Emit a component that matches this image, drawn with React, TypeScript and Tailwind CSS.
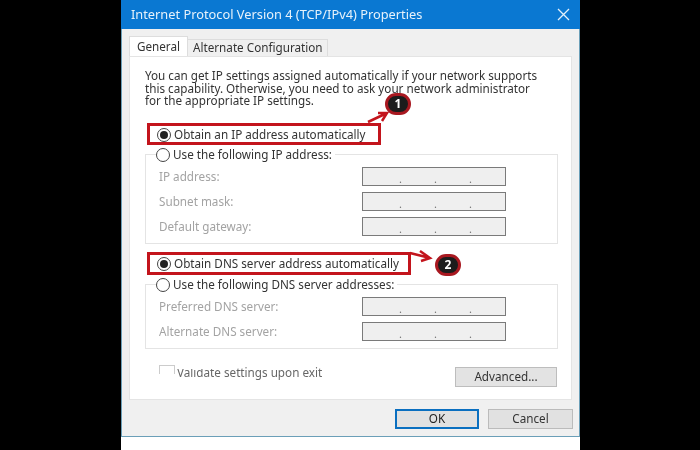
import React from "react";

function Radio({ checked }: { checked?: boolean }) {
  return (
    <span className="w-[14px] h-[14px] rounded-full border border-[#444] bg-white flex items-center justify-center shrink-0">
      {checked && <span className="w-[8px] h-[8px] rounded-full bg-[#222]" />}
    </span>
  );
}

function IpBox() {
  return (
    <div className="w-[144px] h-[19px] border border-[#7a7a7a] bg-[#efefef] flex items-center pl-[36px] gap-[32px] text-[#777] text-[11px] leading-none pt-[3px]">
      <span>.</span>
      <span>.</span>
      <span>.</span>
    </div>
  );
}

function FieldRow({ label }: { label: string }) {
  return (
    <div className="flex items-center justify-between h-[19px] pr-[51px] pl-[13px] text-[#a3a3a3]">
      <span>{label}</span>
      <IpBox />
    </div>
  );
}

function Badge({ n, className }: { n: string; className: string }) {
  return (
    <div
      className={`absolute w-[26px] h-[22px] rounded-full bg-[#1c1c1c] border-[3px] border-[#a81820] text-white text-[12px] font-bold flex items-center justify-center ${className}`}
    >
      {n}
    </div>
  );
}

export default function App() {
  return (
    <div className="relative w-[700px] h-[450px] bg-black pl-[121px] pr-[120px] overflow-hidden font-['Noto_Sans',sans-serif] text-[11.7px] text-[#333] blur-[0.4px]">
      <div className="h-full flex flex-col bg-white">
        <div className="h-[437px] flex flex-col bg-[#f0f0f0] border-x border-b border-[#6b9fb8]">
          <div className="h-[29px] -mx-px bg-[#0a78d2] flex items-center justify-between pl-[10px] pr-[10px] text-white/90 text-[12.8px] shrink-0">
            <span>Internet Protocol Version 4 (TCP/IPv4) Properties</span>
            <svg width="13" height="13" viewBox="0 0 13 13" fill="none" stroke="#e4f0fa" strokeWidth="1.3">
              <path d="M1 1l11 11M12 1L1 12" />
            </svg>
          </div>
          <div className="flex items-end h-[27px] pl-[7px] shrink-0">
            <div className="h-[20px] w-[59px] bg-white border border-b-0 border-[#ddd] text-[#333] flex items-center justify-center">General</div>
            <div className="h-[17px] w-[140px] pl-[5px] bg-[#f0f0f0] border border-b-0 border-l-0 border-[#ddd] text-[#333] flex items-center">Alternate Configuration</div>
          </div>
          <div className="mx-[7px] h-[344px] bg-white border border-[#e4e4e4] shrink-0 pl-[15px] pr-[12px] pt-[12px] relative">
            <p className="leading-[12.5px] h-[38px] whitespace-nowrap">
              You can get IP settings assigned automatically if your network supports
              <br />
              this capability. Otherwise, you need to ask your network administrator
              <br />
              for the appropriate IP settings.
            </p>
            <div className="flex items-center gap-[3px] h-[16px] mt-[20px] ml-[12px]">
              <Radio checked />
              <span>Obtain an IP address automatically</span>
            </div>
            <div className="mt-[11px] h-[90px] w-[413px] border border-[#e4e4e4] flex flex-col">
              <div className="flex items-center gap-[3px] h-[14px] -mt-[7px] ml-[10px] bg-white w-fit pr-[3px]">
                <Radio />
                <span>Use the following IP address:</span>
              </div>
              <div className="flex flex-col gap-[6px] mt-[5px]">
                <FieldRow label="IP address:" />
                <FieldRow label="Subnet mask:" />
                <FieldRow label="Default gateway:" />
              </div>
            </div>
            <div className="flex items-center gap-[3px] h-[16px] mt-[12px] ml-[12px]">
              <Radio checked />
              <span>Obtain DNS server address automatically</span>
            </div>
            <div className="mt-[12px] h-[65px] w-[413px] border border-[#e4e4e4] flex flex-col">
              <div className="flex items-center gap-[3px] h-[14px] -mt-[7px] ml-[10px] bg-white w-fit pr-[3px]">
                <Radio />
                <span>Use the following DNS server addresses:</span>
              </div>
              <div className="flex flex-col gap-[6px] mt-[5px]">
                <FieldRow label="Preferred DNS server:" />
                <FieldRow label="Alternate DNS server:" />
              </div>
            </div>
            <div className="flex items-start justify-between mt-[18px] w-[412px]">
              <div className="flex items-start pl-[14px] text-[#666] relative -mt-[2px]">
                <span className="w-[16px] h-[9px] border border-b-0 border-[#ccc] mr-[2px]" />
                <span className="leading-[16px] -mt-[1px]">Validate settings upon exit</span>
                <span className="absolute left-[32px] top-0 w-[44px] h-[4px] bg-white" />
              </div>
              <div className="w-[102px] h-[20px] bg-[#e3e3e3] border border-[#bdbdbd] flex items-center justify-center text-[#333]">Advanced...</div>
            </div>
          </div>
          <div className="flex justify-end gap-[9px] pr-[6px] pt-[9px] shrink-0">
            <div className="w-[84px] h-[20px] bg-[#e1e1e1] border-2 border-[#0a6fc0] flex items-center justify-center text-[#222]">OK</div>
            <div className="w-[85px] h-[20px] bg-[#e1e1e1] border border-[#bbb] flex items-center justify-center text-[#333]">Cancel</div>
          </div>
        </div>
      </div>

      {/* annotations over the screenshot */}
      <div className="absolute left-[147px] top-[123px] w-[234px] h-[22px] border-[3px] border-[#c3141c]" />
      <div className="absolute left-[147px] top-[252px] w-[264px] h-[23px] border-[3px] border-[#c3141c]" />
      <svg className="absolute left-[360px] top-[105px]" width="32" height="22" viewBox="0 0 32 22" fill="none" stroke="#c3141c" strokeWidth="2.5">
        <path d="M8 17L27 8M18 8l9 0-5 8" />
      </svg>
      <svg className="absolute left-[408px] top-[248px]" width="26" height="16" viewBox="0 0 26 16" fill="none" stroke="#c3141c" strokeWidth="2.5">
        <path d="M2 5l20 5M12 3l10 7-9 3" />
      </svg>
      <Badge n="1" className="left-[385px] top-[93px]" />
      <Badge n="2" className="left-[435px] top-[254px]" />
    </div>
  );
}
